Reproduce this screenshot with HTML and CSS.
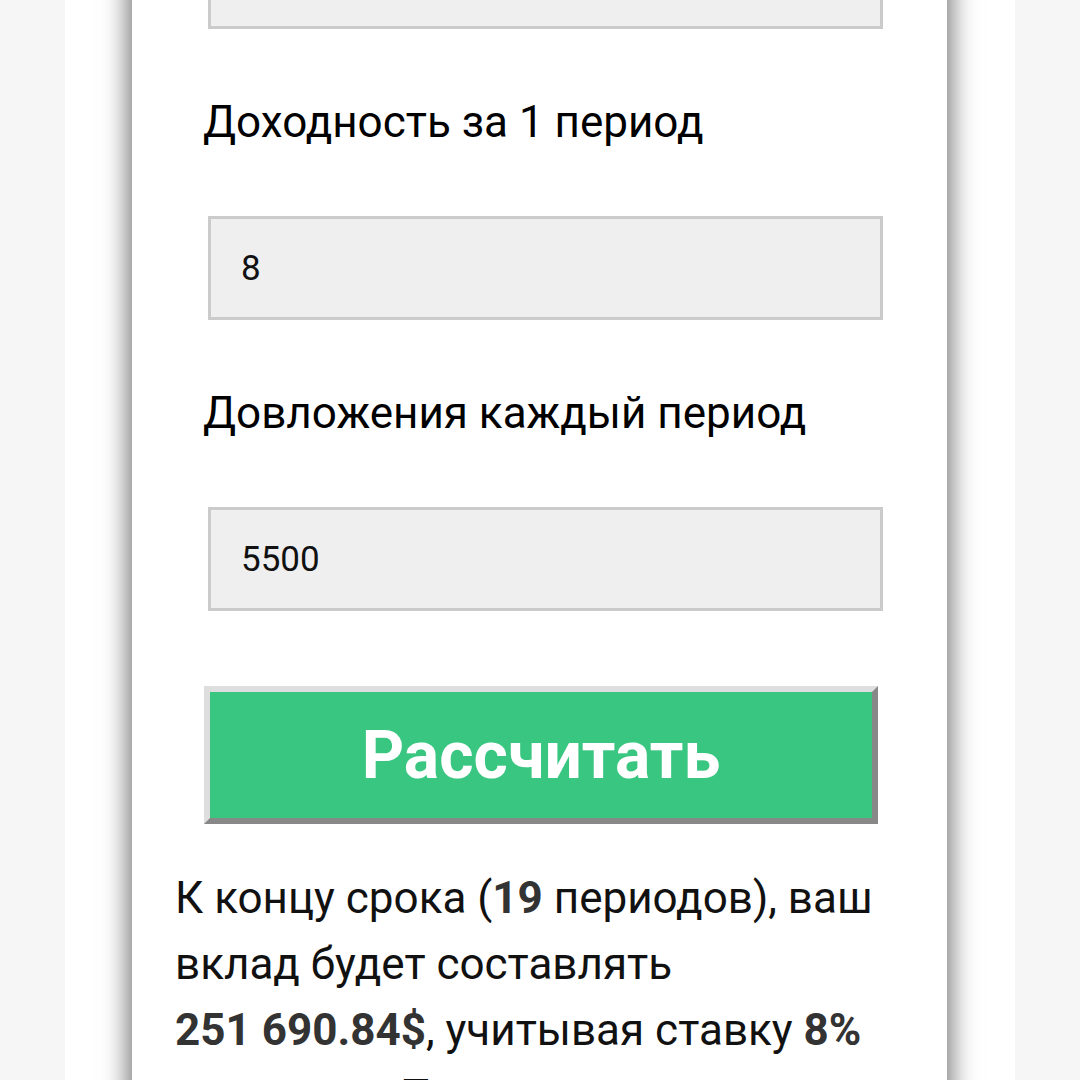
FILE: index.html
```html
<!DOCTYPE html>
<html lang="ru">
<head>
  <meta charset="UTF-8">
  <meta name="viewport" content="width=device-width, initial-scale=1.0">
  <title>Калькулятор сложного процента</title>
  <link rel="stylesheet" href="styles.css">
</head>
<body>
  <div class="page">
    <div class="sheet">
      <div class="card">
        <form class="calc">
          <input type="text" class="field first" value="">

          <label for="rate">Доходность за 1 период</label>
          <input type="text" id="rate" class="field" value="8">

          <label for="extra">Довложения каждый период</label>
          <input type="text" id="extra" class="field" value="5500">

          <button type="button" class="calc-btn">Рассчитать</button>
        </form>

        <!-- Результат расчёта -->
        <p class="result">
          К концу срока (<b>19</b> периодов), ваш вклад будет составлять
          <b>251&nbsp;690.84$</b>, учитывая ставку <b>8%</b> за период. Также учтены довложения.
        </p>
      </div>
    </div>
  </div>
</body>
</html>
```

FILE: styles.css
```css
body {
  margin: 0;
  font-family: Roboto, "Noto Sans", Arial, sans-serif;
  overflow: hidden;
}

.page {
  background-color: #f6f6f6;
  padding: 0 65px;
  min-height: 100vh;
}

.sheet {
  background-color: #fff;
  padding: 0 68px 0 67px;
  min-height: 100vh;
}

.card {
  background-color: #fff;
  box-shadow: 0 0 24px 4px rgba(0, 0, 0, 0.55);
  min-height: 100vh;
  padding-bottom: 40px;
}

.calc {
  padding-left: 71px;
}

.calc label {
  display: block;
  margin: 60px 0 61px;
  font-size: 44px;
  line-height: 66px;
  color: #000;
}

.field {
  display: block;
  box-sizing: border-box;
  width: 675px;
  height: 104px;
  margin: 0 0 0 5px;
  padding: 0 30px;
  border: 3px solid #cbcbcb;
  border-radius: 0;
  background-color: #efefef;
  font-family: Roboto, Arial, sans-serif;
  font-size: 35px;
  color: #111;
}

.field.first {
  margin-top: -75px;
}

.calc-btn {
  display: block;
  box-sizing: border-box;
  width: 674px;
  height: 138px;
  margin: 75px 0 0 1px;
  border: 6px solid;
  border-color: #dedede #888 #888 #dedede;
  background-color: #38c680;
  color: #fff;
  font-family: Roboto, Arial, sans-serif;
  font-size: 66px;
  font-weight: 700;
  cursor: pointer;
}

.result {
  margin: 41px 0 0;
  padding: 0 52px 0 43px;
  font-size: 44px;
  line-height: 66px;
  color: #111;
}

.result b {
  color: #333;
}
```
